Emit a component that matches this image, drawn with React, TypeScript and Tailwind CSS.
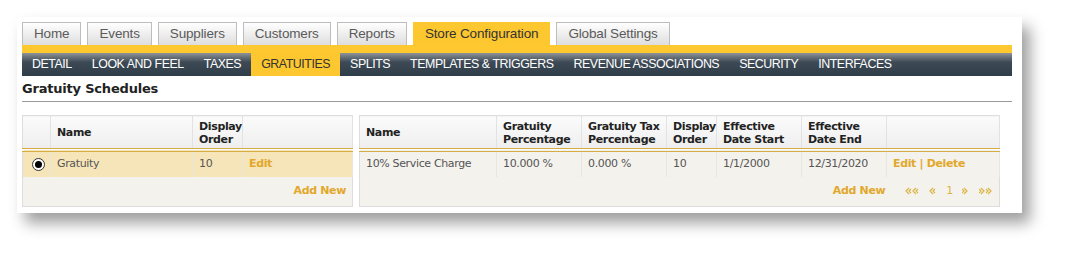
import type { ReactNode } from 'react'

const topTabs = ['Home', 'Events', 'Suppliers', 'Customers', 'Reports', 'Store Configuration', 'Global Settings']
const subTabs = ['DETAIL', 'LOOK AND FEEL', 'TAXES', 'GRATUITIES', 'SPLITS', 'TEMPLATES & TRIGGERS', 'REVENUE ASSOCIATIONS', 'SECURITY', 'INTERFACES']

const thCls = 'border-r border-[#e2e2e2] bg-gradient-to-b from-[#fbfbfb] to-[#eeeeee] px-[6px] pt-[2px] pb-[1px] text-left align-middle text-[11px] font-bold leading-[13px] text-[#222]'
const tdCls = 'border-r border-[#e8e6df] px-[6px] text-[11px] text-[#555]'
const link = 'font-bold text-[#e2a82b]'

function Th({ children, w }: { children?: ReactNode; w: number }) {
  return (
    <th className={thCls} style={{ width: w }}>
      <div className="flex h-[29px] items-center">{children}</div>
    </th>
  )
}

function Chev({ dir, double }: { dir: 'l' | 'r'; double?: boolean }) {
  const one = (x: number) =>
    dir === 'l'
      ? <path key={x} d={`M${x + 4} 1 L${x + 1} 4 L${x + 4} 7 M${x + 6} 2 L${x + 4} 4 L${x + 6} 6`} />
      : <path key={x} d={`M${x + 2} 1 L${x + 5} 4 L${x + 2} 7 M${x} 2 L${x + 2} 4 L${x} 6`} />
  return (
    <svg width={double ? 15 : 8} height="8" viewBox={`0 0 ${double ? 15 : 8} 8`} fill="none" stroke="#dcb443" strokeWidth="1.2">
      {double ? [one(0), one(7)] : one(0)}
    </svg>
  )
}

export default function App() {
  return (
    <div className="h-[262px] w-[1070px] bg-white pl-[17px] pt-[17px]" style={{ fontFamily: '"DejaVu Sans", Verdana, sans-serif' }}>
      <div className="h-[196px] w-[1005px] bg-white pl-[5px] pr-[10px] pt-[5px] shadow-[8px_10px_14px_rgba(0,0,0,0.38)]">
        {/* top tabs */}
        <div className="flex gap-[6px]" style={{ fontFamily: '"Liberation Sans", Arial, sans-serif' }}>
          {topTabs.map((t) => {
            const on = t === 'Store Configuration'
            return (
              <div key={t} className={`flex h-[23px] items-center border border-b-0 px-[11px] text-[13.5px] tracking-[-0.15px] ${on ? 'border-[#fdc72f] bg-[#fdc72f] text-[#333]' : 'border-[#bdbdbd] bg-gradient-to-b from-[#ffffff] to-[#dedede] text-[#5a5a5a]'}`}>
                {t}
              </div>
            )
          })}
        </div>
        <div className="h-[8px] bg-[#fdc830]" />
        <div className="flex h-[23px] bg-gradient-to-b from-[#8e9397] via-[#3d4a56] via-40% to-[#2f3d49]" style={{ fontFamily: '"Liberation Sans", Arial, sans-serif' }}>
          {subTabs.map((t) => {
            const on = t === 'GRATUITIES'
            return (
              <div key={t} className={`flex items-center px-[10px] text-[12.4px] tracking-[-0.45px] ${on ? 'bg-[#fdc72f] text-[#333]' : 'text-white'}`}>
                {t}
              </div>
            )
          })}
        </div>
        <div className="border-b border-[#9a9a9a] pb-[4px] pt-[4px] text-[13px] font-bold leading-[17px] text-[#222] tracking-[-0.2px]" style={{ fontFamily: 'Verdana, "DejaVu Sans", sans-serif' }}>
          Gratuity Schedules
        </div>

        <div className="mt-[13px] flex gap-[6px] tracking-[-0.35px]">
          {/* left table */}
          <table className="w-[330px] table-fixed border-collapse border border-[#dddddd]">
            <thead>
              <tr className="border-b-[4px] border-double border-[#d6ad45]">
                <Th w={28} />
                <Th w={142}>Name</Th>
                <Th w={50}>Display Order</Th>
                <Th w={110} />
              </tr>
            </thead>
            <tbody>
              <tr className="h-[27px] bg-[#f6e5b9]">
                <td className={tdCls}>
                  <div className="ml-[3px] grid h-[13px] w-[13px] place-items-center rounded-full border border-[#333] bg-white">
                    <div className="h-[7px] w-[7px] rounded-full bg-black" />
                  </div>
                </td>
                <td className={tdCls}>Gratuity</td>
                <td className={tdCls}>10</td>
                <td className={`${tdCls} ${link}`}>Edit</td>
              </tr>
              <tr className="h-[29px] bg-[#f4f2ed]">
                <td colSpan={4} className={`px-[6px] text-right text-[11px] ${link}`}>Add New</td>
              </tr>
            </tbody>
          </table>

          {/* right table */}
          <table className="w-[640px] table-fixed border-collapse border border-[#dddddd]">
            <thead>
              <tr className="border-b-[4px] border-double border-[#d6ad45]">
                <Th w={137}>Name</Th>
                <Th w={85}>Gratuity Percentage</Th>
                <Th w={85}>Gratuity Tax Percentage</Th>
                <Th w={50}>Display Order</Th>
                <Th w={85}>Effective Date Start</Th>
                <Th w={85}>Effective Date End</Th>
                <Th w={113} />
              </tr>
            </thead>
            <tbody>
              <tr className="h-[27px] bg-[#f4f2ed]">
                <td className={tdCls}>10% Service Charge</td>
                <td className={tdCls}>10.000 %</td>
                <td className={tdCls}>0.000 %</td>
                <td className={tdCls}>10</td>
                <td className={tdCls}>1/1/2000</td>
                <td className={tdCls}>12/31/2020</td>
                <td className={`${tdCls} ${link}`}>Edit | Delete</td>
              </tr>
              <tr className="h-[29px] bg-[#f4f2ed]">
                <td colSpan={7} className="px-[5px] text-[11px]">
                  <div className="flex items-center justify-end">
                    <span className={link}>Add New</span>
                    <div className="ml-[20px] flex items-center gap-[9px] text-[11px] text-[#dcb443]">
                      <Chev dir="l" double />
                      <Chev dir="l" />
                      <span>1</span>
                      <Chev dir="r" />
                      <Chev dir="r" double />
                    </div>
                  </div>
                </td>
              </tr>
            </tbody>
          </table>
        </div>
      </div>
    </div>
  )
}
